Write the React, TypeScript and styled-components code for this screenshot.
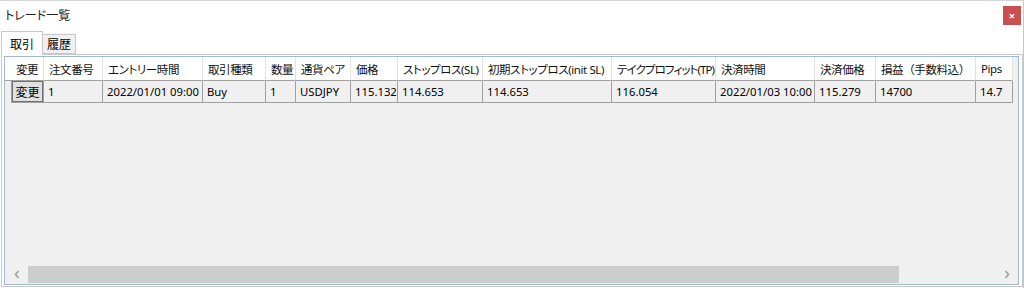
import styled, { createGlobalStyle } from "styled-components"

const GlobalStyle = createGlobalStyle`
  html, body {
    margin: 0;
    padding: 0;
    background: #ffffff;
  }
  body {
    font-family: "Noto Sans", "Noto Sans CJK JP", sans-serif;
    font-size: 11.5px;
    color: #000000;
    font-feature-settings: "palt";
  }
`

const COLUMN_WIDTHS = [7, 32, 59, 100, 63, 30, 55, 47, 85, 129, 104, 99, 61, 100, 37]

const Window = styled.div`
  width: 1024px;
  height: 288px;
  box-sizing: border-box;
  border-top: 1px solid #d4d4d4;
  border-right: 1px solid #c8c8c8;
  background: #ffffff;
  display: flex;
  flex-direction: column;
  overflow: hidden;
`

const TitleBar = styled.div`
  height: 31px;
  display: flex;
  align-items: center;
  justify-content: space-between;
  padding: 0 2px 0 5px;
`

const TitleText = styled.span`
  font-size: 12px;
  color: #222;
  margin-top: -4px;
`

const CloseButton = styled.div`
  width: 18px;
  height: 19px;
  background: #c9504f;
  color: #ffffff;
  font-size: 11px;
  font-weight: 700;
  display: flex;
  align-items: center;
  justify-content: center;
  margin-top: -2px;
  line-height: 1;
`

const TabStrip = styled.div`
  display: flex;
  align-items: flex-end;
  height: 22px;
  padding-left: 1px;
  position: relative;
  z-index: 1;
`

const Tab = styled.div<{ $active?: boolean }>`
  box-sizing: border-box;
  height: ${(p) => (p.$active ? "24px" : "20px")};
  margin-bottom: ${(p) => (p.$active ? "-1px" : "0")};
  padding: 0 ${(p) => (p.$active ? "8px" : "4px")};
  display: flex;
  align-items: center;
  border: 1px solid #c8c8c8;
  border-bottom: ${(p) => (p.$active ? "none" : "1px solid #c8c8c8")};
  border-left: ${(p) => (p.$active ? "1px solid #c8c8c8" : "none")};
  background: ${(p) => (p.$active ? "#ffffff" : "#f0f0f0")};
  font-size: 12px;
`

const TabPanel = styled.div`
  flex: 1;
  margin: 0 0 1px 1px;
  border: 1px solid #c8c8c8;
  padding: 1px 3px 1px 2px;
  display: flex;
  min-height: 0;
`

const GridFrame = styled.div`
  flex: 1;
  border: 1px solid #9fbad8;
  background: #f0f0f0;
  display: flex;
  flex-direction: column;
  overflow: hidden;
`

const GridRow = styled.div<{ $header?: boolean }>`
  display: grid;
  grid-template-columns: ${COLUMN_WIDTHS.map((w) => `${w}px`).join(" ")} 1fr;
  height: ${(p) => (p.$header ? "24px" : "22px")};
  background: ${(p) => (p.$header ? "#ffffff" : "transparent")};
`

const HeaderCell = styled.div<{ $fullWidth?: boolean; $spacing?: number }>`
  box-sizing: border-box;
  border-right: 1px solid #e2e2e2;
  border-bottom: 1px solid #a0a0a0;
  padding-left: 5px;
  display: flex;
  align-items: center;
  white-space: nowrap;
  overflow: hidden;
  color: #111;
  letter-spacing: ${(p) => p.$spacing ?? -0.4}px;
  font-feature-settings: ${(p) => (p.$fullWidth ? "normal" : "\"palt\"")};
`

const HeaderCorner = styled(HeaderCell)`
  border-right: none;
  padding: 0;
`

const HeaderFill = styled(HeaderCell)`
  border-right: none;
  border-bottom: none;
  background: #f0f0f0;
`

const DataCell = styled.div<{ $pad?: number }>`
  box-sizing: border-box;
  border-right: 1px solid #a0a0a0;
  border-bottom: 1px solid #a0a0a0;
  padding-left: ${(p) => p.$pad ?? 4}px;
  display: flex;
  align-items: center;
  white-space: nowrap;
  overflow: hidden;
  font-size: 11.3px;
`

const RowHeader = styled.div`
  border-right: 1px solid #a0a0a0;
`

const EditButton = styled.button`
  box-sizing: border-box;
  width: 100%;
  height: 100%;
  margin: 0;
  border: 1px solid #707070;
  background: #e1e1e1;
  font-family: "Noto Sans CJK JP", sans-serif;
  font-size: 12px;
  padding: 0;
  color: #000;
`

const Spacer = styled.div`
  flex: 1;
`

const HScrollBar = styled.div`
  height: 17px;
  display: flex;
  align-items: stretch;
  background: #f0f0f0;
  margin-bottom: 1px;
`

const ScrollArrow = styled.div`
  width: 23px;
  display: flex;
  align-items: center;
  justify-content: center;
`

const ScrollTrack = styled.div`
  flex: 1;
  display: flex;
`

const ScrollThumb = styled.div`
  width: 871px;
  background: #cdcdcd;
`

const headers = [
  "変更",
  "注文番号",
  "エントリー時間",
  "取引種類",
  "数量",
  "通貨ペア",
  "価格",
  "ストップロス(SL)",
  "初期ストップロス(init SL)",
  "テイクプロフィット(TP)",
  "決済時間",
  "決済価格",
  "損益（手数料込）",
  "Pips",
]

const row = [
  "1",
  "2022/01/01 09:00",
  "Buy",
  "1",
  "USDJPY",
  "115.132",
  "114.653",
  "114.653",
  "116.054",
  "2022/01/03 10:00",
  "115.279",
  "14700",
  "14.7",
]

const Chevron = ({ dir }: { dir: "left" | "right" }) => (
  <svg width="6" height="9" viewBox="0 0 6 9">
    <path
      d={dir === "left" ? "M4.5 1 L1.5 4.5 L4.5 8" : "M1.5 1 L4.5 4.5 L1.5 8"}
      fill="none"
      stroke="#9a9a9a"
      strokeWidth="1.4"
    />
  </svg>
)

const App = () => {
  return (
    <>
      <GlobalStyle />
      <Window>
        <TitleBar>
          <TitleText>トレード一覧</TitleText>
          <CloseButton>×</CloseButton>
        </TitleBar>

        <TabStrip>
          <Tab $active>取引</Tab>
          <Tab>履歴</Tab>
        </TabStrip>

        <TabPanel>
          <GridFrame>
            {/** header */}
            <GridRow $header>
              <HeaderCorner />
              {headers.map((h, i) => (
                <HeaderCell
                  key={h}
                  $fullWidth={h.startsWith("損益")}
                  $spacing={h.startsWith("テイク") ? -0.9 : undefined}
                  style={i === 0 ? { paddingLeft: 4 } : undefined}
                >
                  {h}
                </HeaderCell>
              ))}
              <HeaderFill />
            </GridRow>

            {/** trade row */}
            <GridRow>
              <RowHeader />
              <DataCell $pad={0}>
                <EditButton>変更</EditButton>
              </DataCell>
              {row.map((v, i) => (
                <DataCell key={i}>{v}</DataCell>
              ))}
            </GridRow>

            <Spacer />

            <HScrollBar>
              <ScrollArrow>
                <Chevron dir="left" />
              </ScrollArrow>
              <ScrollTrack>
                <ScrollThumb />
              </ScrollTrack>
              <ScrollArrow>
                <Chevron dir="right" />
              </ScrollArrow>
            </HScrollBar>
          </GridFrame>
        </TabPanel>
      </Window>
    </>
  )
}

export default App
